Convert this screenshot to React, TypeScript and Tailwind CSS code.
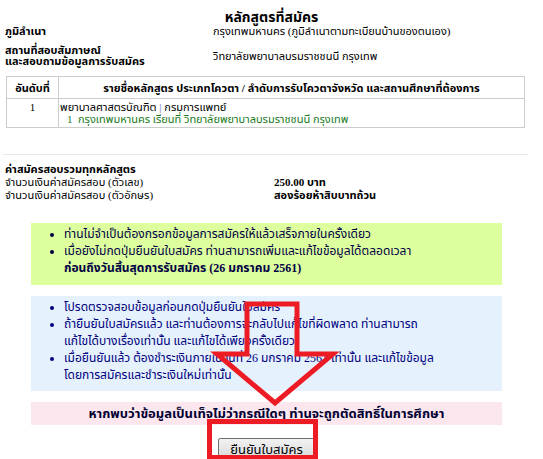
import React from "react";

const FONT = {
  fontFamily: '"Liberation Serif", Tahoma, "Noto Sans Thai", Loma, Garuda, "DejaVu Sans", serif',
};

function InfoRow({
  label,
  value,
}: {
  label: React.ReactNode;
  value: React.ReactNode;
}) {
  return (
    <div className="flex items-center">
      <div className="w-[208px] shrink-0 font-bold leading-[11px]">{label}</div>
      <div className="leading-[11px]">{value}</div>
    </div>
  );
}

export default function App() {
  return (
    <div
      className="relative w-[543px] h-[459px] overflow-hidden bg-white text-[11px] text-black"
      style={FONT}
    >
      {/* heading */}
      <div className="pt-[9px] text-center text-[14px] font-bold leading-[18px]">
        หลักสูตรที่สมัคร
      </div>

      <div className="mt-[-1px] flex flex-col gap-[8px] pl-[5px]">
        <InfoRow
          label="ภูมิลำเนา"
          value="กรุงเทพมหานคร (ภูมิลำเนาตามทะเบียนบ้านของตนเอง)"
        />
        <InfoRow
          label={
            <>
              สถานที่สอบสัมภาษณ์
              <br />
              และสอบถามข้อมูลการรับสมัคร
            </>
          }
          value="วิทยาลัยพยาบาลบรมราชชนนี กรุงเทพ"
        />
      </div>

      {/* table */}
      <table className="mt-[9px] ml-[6px] w-[519px] border-collapse">
        <thead>
          <tr className="h-[22px]">
            <th className="w-[52px] border border-[#cccccc] p-0 font-bold leading-[14px]">อันดับที่</th>
            <th className="border border-[#cccccc] p-0 font-bold leading-[14px]">
              รายชื่อหลักสูตร ประเภทโควตา / ลำดับการรับโควตาจังหวัด และสถานศึกษาที่ต้องการ
            </th>
          </tr>
        </thead>
        <tbody>
          <tr className="h-[29px]">
            <td className="border border-[#cccccc] text-center align-top pt-[2px] leading-[12px]">
              1
            </td>
            <td className="border border-[#cccccc] align-top pt-[2px] pl-[1px] leading-[12px]">
              <div>
                พยาบาลศาสตรบัณฑิต <span className="text-[#6666aa]">|</span> กรมการแพทย์
              </div>
              <div className="pl-[7px] text-[#1a7a1a]">
                1&nbsp;&nbsp;กรุงเทพมหานคร เรียนที่ วิทยาลัยพยาบาลบรมราชชนนี กรุงเทพ
              </div>
            </td>
          </tr>
        </tbody>
      </table>

      <div className="mt-[26px] ml-[3px] w-[525px] border-t border-[#e8e8e8]" />

      {/* fee */}
      <div className="mt-[8px] pl-[5px] leading-[13px]">
        <div className="font-bold">ค่าสมัครสอบรวมทุกหลักสูตร</div>
        <div className="flex">
          <div className="w-[269px]">จำนวนเงินค่าสมัครสอบ (ตัวเลข)</div>
          <div className="font-bold">250.00 บาท</div>
        </div>
        <div className="flex">
          <div className="w-[269px]">จำนวนเงินค่าสมัครสอบ (ตัวอักษร)</div>
          <div className="font-bold">สองร้อยห้าสิบบาทถ้วน</div>
        </div>
      </div>

      {/* notes */}
      <div className="ml-[31px] w-[471px]">
        <div className="mt-[21px] bg-[#ddff9e] pt-[3px] pb-[8px] text-[12px] leading-[17px] text-[#000044]">
          <ul className="list-disc pl-[33px]">
            <li>ท่านไม่จำเป็นต้องกรอกข้อมูลการสมัครให้แล้วเสร็จภายในครั้งเดียว</li>
            <li>
              เมื่อยังไม่กดปุ่มยืนยันใบสมัคร ท่านสามารถเพิ่มและแก้ไขข้อมูลได้ตลอดเวลา
              <br />
              <span className="font-bold">ก่อนถึงวันสิ้นสุดการรับสมัคร (26 มกราคม 2561)</span>
            </li>
          </ul>
        </div>

        <div className="mt-[11px] bg-[#e5f1fd] pt-[3px] pb-[7px] text-[12px] leading-[17px] text-[#000080]">
          <ul className="list-disc pl-[33px]">
            <li>โปรดตรวจสอบข้อมูลก่อนกดปุ่มยืนยันใบสมัคร</li>
            <li>
              ถ้ายืนยันใบสมัครแล้ว และท่านต้องการจะกลับไปแก้ไขที่ผิดพลาด ท่านสามารถ
              <br />
              แก้ไขได้บางเรื่องเท่านั้น และแก้ไขได้เพียงครั้งเดียว
            </li>
            <li>
              เมื่อยืนยันแล้ว ต้องชำระเงินภายในวันที่ 26 มกราคม 2561 เท่านั้น และแก้ไขข้อมูล
              <br />
              โดยการสมัครและชำระเงินใหม่เท่านั้น
            </li>
          </ul>
        </div>

        <div className="mt-[11px] flex h-[23px] items-center justify-center bg-[#fde7ee] text-[13px] font-bold text-[#000033]">
          หากพบว่าข้อมูลเป็นเท็จไม่ว่ากรณีใดๆ ท่านจะถูกตัดสิทธิ์ในการศึกษา
        </div>

        <div className="mt-[13px] flex justify-center">
          <button className="h-[23px] w-[97px] rounded-[2px] border border-[#707070] bg-gradient-to-b from-[#f2f2f2] to-[#d8d8d8] text-[13px] leading-[20px] text-black">
            ยืนยันใบสมัคร
          </button>
        </div>
      </div>

      {/* red annotation overlay */}
      <svg
        className="pointer-events-none absolute left-0 top-0"
        width="543"
        height="459"
        viewBox="0 0 543 459"
      >
        <polygon
          points="247,304 297,304 297,354 333,354 275,403 217,354 247,354"
          fill="none"
          stroke="#ed1c24"
          strokeWidth="5"
          strokeLinejoin="miter"
        />
        <rect
          x="209.5"
          y="421.5"
          width="106"
          height="36"
          fill="none"
          stroke="#ed1c24"
          strokeWidth="5"
        />
      </svg>
    </div>
  );
}
